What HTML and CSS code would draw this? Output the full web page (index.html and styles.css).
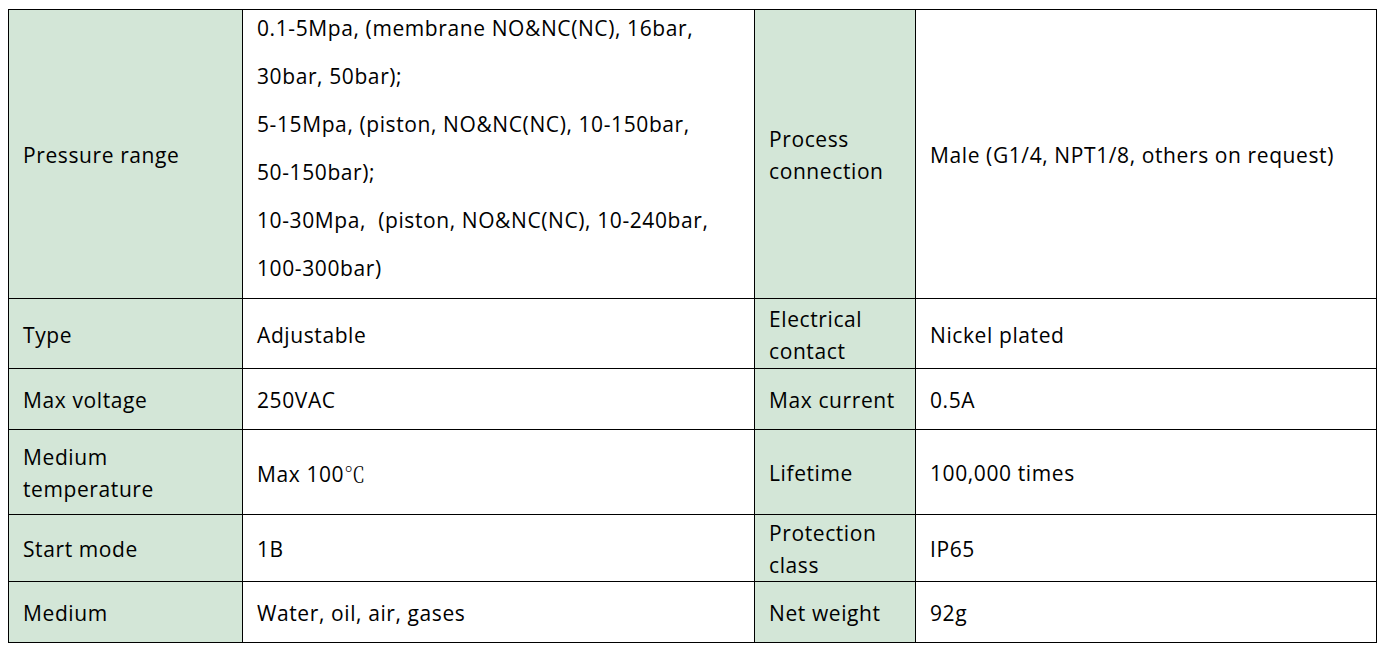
FILE: index.html
```html
<!DOCTYPE html>
<html>
<head>
<meta charset="utf-8">
<link rel="stylesheet" href="styles.css">
</head>
<body>
<table class="spec">
  <colgroup>
    <col class="c1"><col class="c2"><col class="c3"><col class="c4">
  </colgroup>
  <tr class="r1">
    <td class="label">Pressure range</td>
    <td class="multi">
      <div class="ln">0.1-5Mpa, (membrane NO&amp;NC(NC), 16bar,</div>
      <div class="ln">30bar, 50bar);</div>
      <div class="ln">5-15Mpa, (piston, NO&amp;NC(NC), 10-150bar,</div>
      <div class="ln">50-150bar);</div>
      <div class="ln">10-30Mpa,&nbsp; (piston, NO&amp;NC(NC), 10-240bar,</div>
      <div class="ln">100-300bar)</div>
    </td>
    <td class="label">Process<br>connection</td>
    <td>Male (G1/4, NPT1/8, others on request)</td>
  </tr>
  <tr class="r2">
    <td class="label">Type</td>
    <td>Adjustable</td>
    <td class="label">Electrical<br>contact</td>
    <td>Nickel plated</td>
  </tr>
  <tr class="r3">
    <td class="label">Max voltage</td>
    <td>250VAC</td>
    <td class="label">Max current</td>
    <td>0.5A</td>
  </tr>
  <tr class="r4">
    <td class="label">Medium<br>temperature</td>
    <td>Max 100<span class="deg">℃</span></td>
    <td class="label">Lifetime</td>
    <td>100,000 times</td>
  </tr>
  <tr class="r5">
    <td class="label">Start mode</td>
    <td>1B</td>
    <td class="label">Protection<br>class</td>
    <td>IP65</td>
  </tr>
  <tr class="r6">
    <td class="label">Medium</td>
    <td>Water, oil, air, gases</td>
    <td class="label">Net weight</td>
    <td>92g</td>
  </tr>
</table>
</body>
</html>
```

FILE: styles.css
```css
html, body {
  margin: 0;
  padding: 0;
  background: #ffffff;
}
body {
  padding: 9px 0 0 8px;
  font-family: "Open Sans", "Noto Sans", "Noto Sans CJK SC", sans-serif;
  font-size: 21px;
  letter-spacing: 0.6px;
  color: #000000;
}
.spec {
  border-collapse: collapse;
  table-layout: fixed;
  width: 1368px;
}
.c1 { width: 234px; }
.c2 { width: 512px; }
.c3 { width: 161px; }
.c4 { width: 461px; }
.spec td {
  border: 1px solid #000000;
  padding: 2px 6px 0 14px;
  vertical-align: middle;
  line-height: 32px;
  white-space: nowrap;
  overflow: visible;
}
.spec td.label {
  background: #d3e6d7;
}
.spec td.multi {
  padding-top: 0;
}
.multi .ln {
  height: 48px;
  line-height: 36px;
}
.r1 { height: 289px; }
.r2 { height: 70px; }
.r3 { height: 61px; }
.r4 { height: 85px; }
.r5 { height: 66px; }
.r6 { height: 61px; }
.deg {
  font-family: "Noto Serif CJK SC", "Noto Sans CJK SC", serif;
  font-weight: 300;
  letter-spacing: 0;
}
```
